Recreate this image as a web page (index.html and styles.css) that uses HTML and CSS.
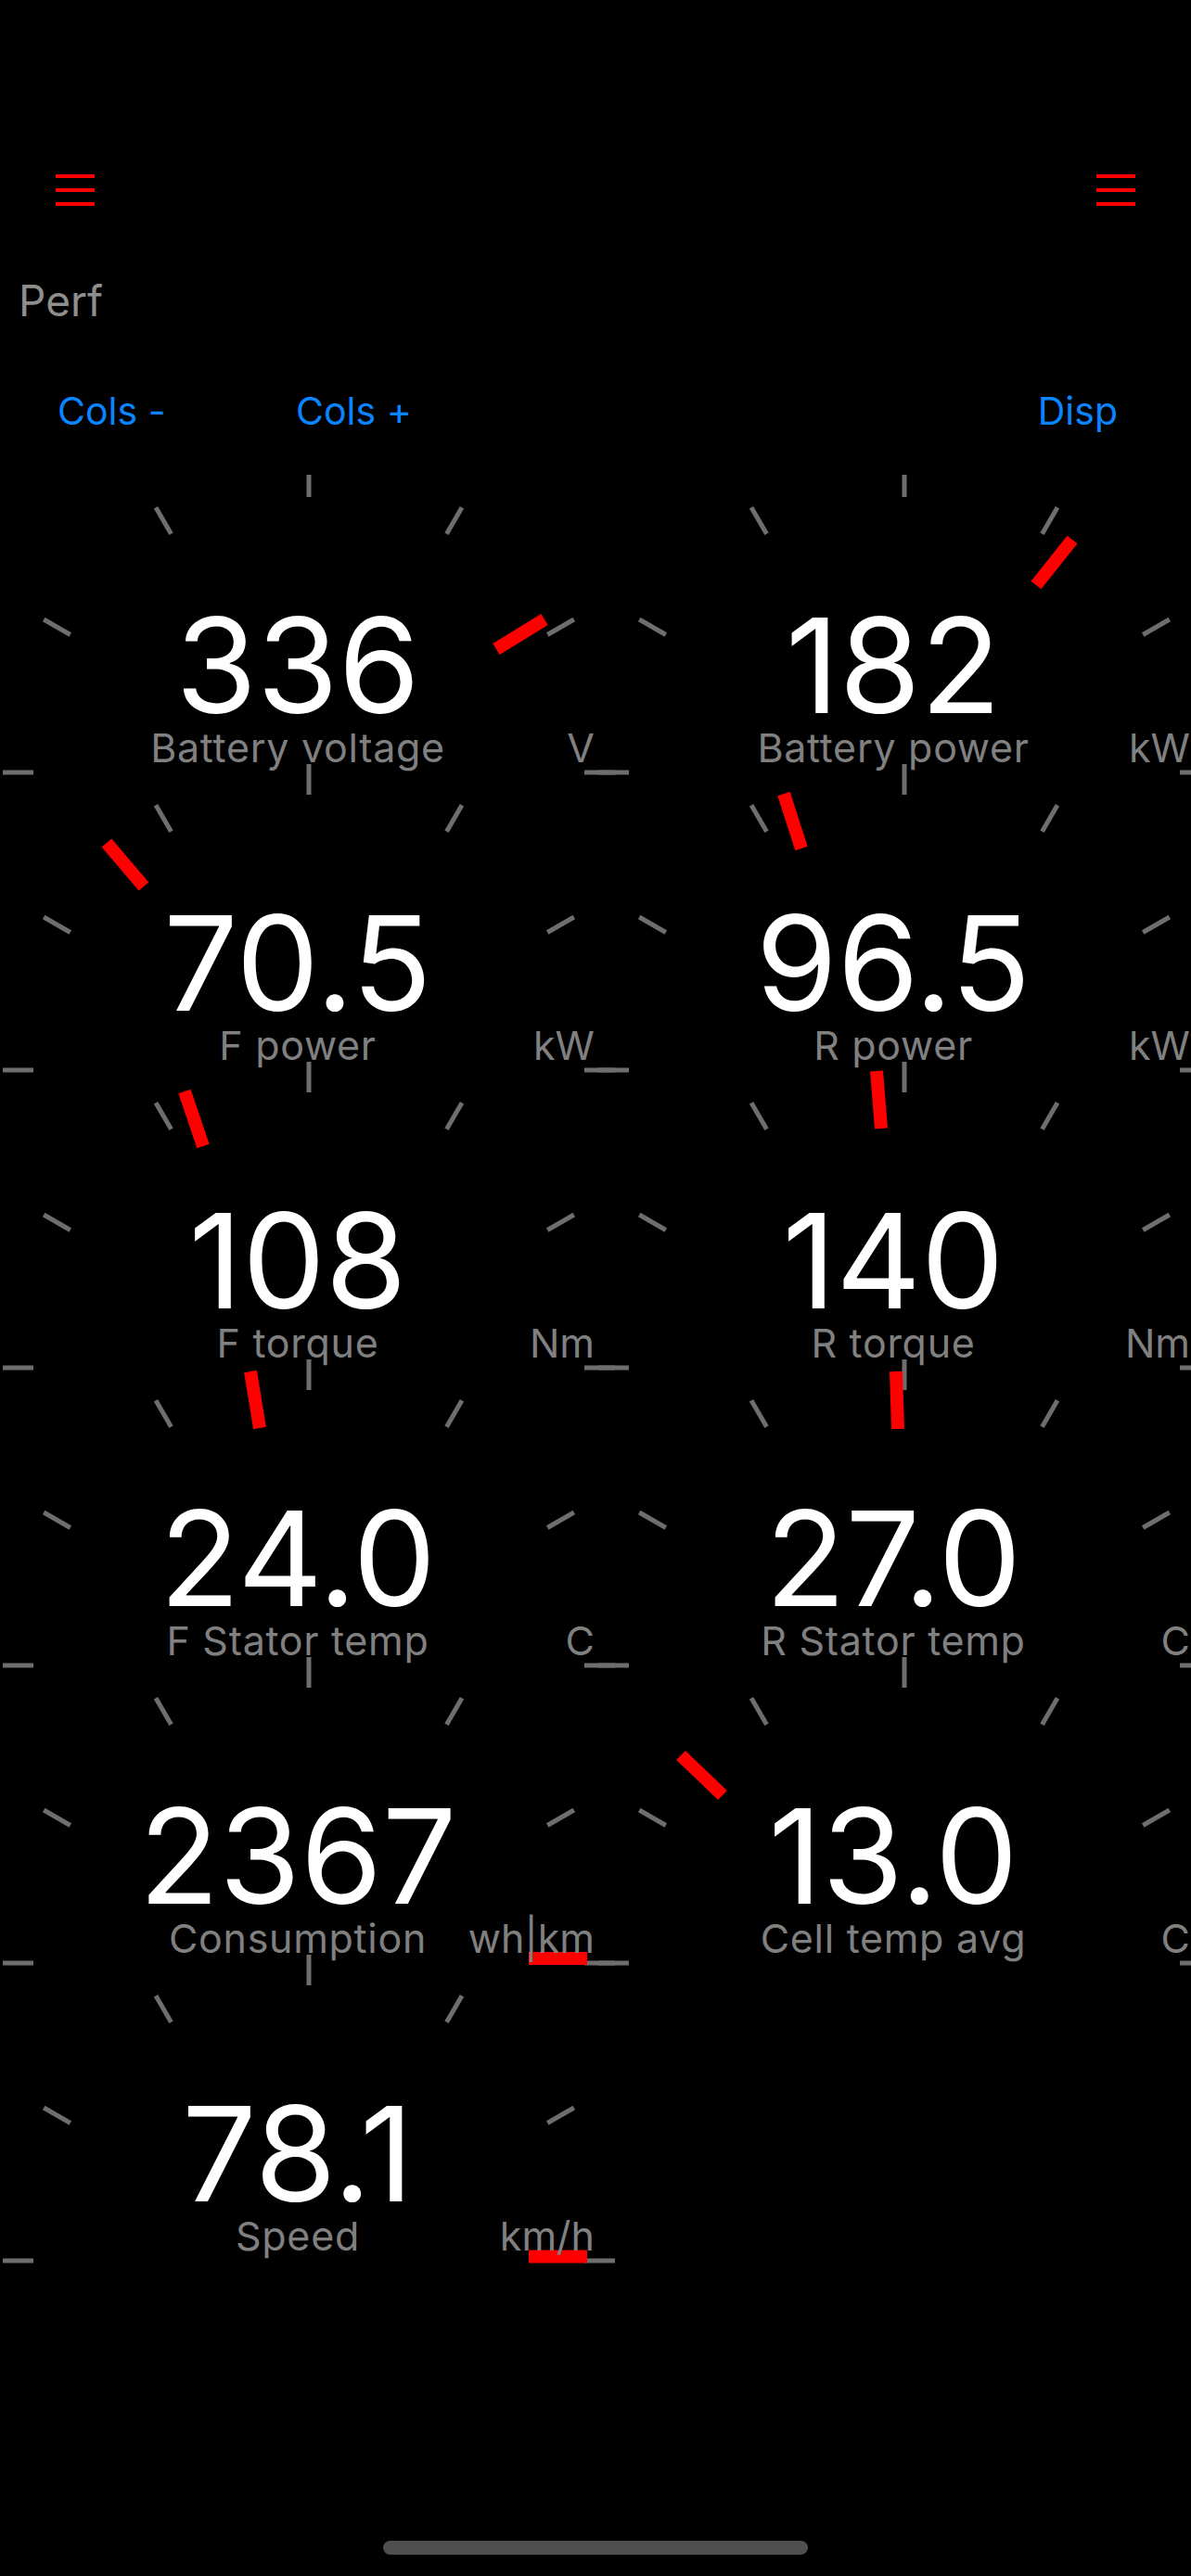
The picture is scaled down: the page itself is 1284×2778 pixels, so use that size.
FILE: index.html
```html
<!DOCTYPE html>
<html lang="en">
<head>
<meta charset="utf-8">
<title>Perf</title>
<link rel="stylesheet" href="styles.css">
</head>
<body>
<svg class="defs" width="0" height="0" aria-hidden="true">
  <defs>
    <g id="ticks" class="ticks">
      <line x1="297" y1="0" x2="330" y2="0"/>
      <line x1="257.2" y1="-148.5" x2="285.8" y2="-165"/>
      <line x1="148.5" y1="-257.2" x2="165" y2="-285.8"/>
      <line x1="0" y1="-297" x2="0" y2="-330"/>
      <line x1="-148.5" y1="-257.2" x2="-165" y2="-285.8"/>
      <line x1="-257.2" y1="-148.5" x2="-285.8" y2="-165"/>
      <line x1="-297" y1="0" x2="-330" y2="0"/>
    </g>
  </defs>
</svg>
<div class="screen">
  <header class="nav">
    <button class="menu" aria-label="Menu">
      <svg viewBox="0 0 42 34" width="42" height="34"><path d="M0 2H42M0 17H42M0 32H42"/></svg>
    </button>
    <button class="menu" aria-label="Menu">
      <svg viewBox="0 0 42 34" width="42" height="34"><path d="M0 2H42M0 17H42M0 32H42"/></svg>
    </button>
  </header>
  <div class="title">Perf</div>
  <nav class="toolbar">
    <span class="btn">Cols -</span>
    <span class="btn">Cols +</span>
    <span class="btn disp">Disp</span>
  </nav>
  <main class="grid">
    <div class="cell">
      <svg class="gauge" viewBox="-333 -341 700 360"><use href="#ticks"/><line class="needle" x1="202" y1="-133" x2="254" y2="-165"/></svg>
      <div class="value">336</div>
      <div class="caption"><span></span><span class="label">Battery voltage</span><span class="unit">V</span></div>
    </div>
    <div class="cell">
      <svg class="gauge" viewBox="-333 -341 700 360"><use href="#ticks"/><line class="needle" x1="142" y1="-202" x2="181" y2="-251"/></svg>
      <div class="value">182</div>
      <div class="caption"><span></span><span class="label">Battery power</span><span class="unit">kW</span></div>
    </div>
    <div class="cell">
      <svg class="gauge" viewBox="-333 -341 700 360"><use href="#ticks"/><line class="needle" x1="-178" y1="-198" x2="-218" y2="-245"/></svg>
      <div class="value">70.5</div>
      <div class="caption"><span></span><span class="label">F power</span><span class="unit">kW</span></div>
    </div>
    <div class="cell">
      <svg class="gauge" viewBox="-333 -341 700 360"><use href="#ticks"/><line class="needle" x1="-111" y1="-239" x2="-130" y2="-298"/></svg>
      <div class="value">96.5</div>
      <div class="caption"><span></span><span class="label">R power</span><span class="unit">kW</span></div>
    </div>
    <div class="cell">
      <svg class="gauge" viewBox="-333 -341 700 360"><use href="#ticks"/><line class="needle" x1="-114" y1="-239" x2="-134" y2="-298"/></svg>
      <div class="value">108</div>
      <div class="caption"><span></span><span class="label">F torque</span><span class="unit">Nm</span></div>
    </div>
    <div class="cell">
      <svg class="gauge" viewBox="-333 -341 700 360"><use href="#ticks"/><line class="needle" x1="-25" y1="-258" x2="-30" y2="-320"/></svg>
      <div class="value">140</div>
      <div class="caption"><span></span><span class="label">R torque</span><span class="unit">Nm</span></div>
    </div>
    <div class="cell">
      <svg class="gauge" viewBox="-333 -341 700 360"><use href="#ticks"/><line class="needle" x1="-53" y1="-256" x2="-63" y2="-317"/></svg>
      <div class="value">24.0</div>
      <div class="caption"><span></span><span class="label">F Stator temp</span><span class="unit">C</span></div>
    </div>
    <div class="cell">
      <svg class="gauge" viewBox="-333 -341 700 360"><use href="#ticks"/><line class="needle" x1="-7" y1="-255" x2="-9" y2="-317"/></svg>
      <div class="value">27.0</div>
      <div class="caption"><span></span><span class="label">R Stator temp</span><span class="unit">C</span></div>
    </div>
    <div class="cell">
      <svg class="gauge" viewBox="-333 -341 700 360"><use href="#ticks"/><line class="needle" x1="237" y1="-5" x2="300" y2="-5"/></svg>
      <div class="value">2367</div>
      <div class="caption"><span></span><span class="label">Consumption</span><span class="unit">wh|km</span></div>
    </div>
    <div class="cell">
      <svg class="gauge" viewBox="-333 -341 700 360"><use href="#ticks"/><line class="needle" x1="-196" y1="-181" x2="-241" y2="-224"/></svg>
      <div class="value">13.0</div>
      <div class="caption"><span></span><span class="label">Cell temp avg</span><span class="unit">C</span></div>
    </div>
    <div class="cell">
      <svg class="gauge" viewBox="-333 -341 700 360"><use href="#ticks"/><line class="needle" x1="237" y1="-4.5" x2="300" y2="-4.5"/></svg>
      <div class="value">78.1</div>
      <div class="caption"><span></span><span class="label">Speed</span><span class="unit">km/h</span></div>
    </div>
  </main>
  <div class="home"></div>
</div>
</body>
</html>
```

FILE: styles.css
```css
* {
  box-sizing: border-box;
  margin: 0;
  padding: 0;
}

html,
body {
  background: #000;
}

body {
  width: 1284px;
  height: 2778px;
  overflow: hidden;
  font-family: Inter, "Noto Sans", "Liberation Sans", sans-serif;
}

.defs {
  position: absolute;
  width: 0;
  height: 0;
}

.ticks line {
  stroke: #6e6e6e;
  stroke-width: 5;
}

.screen {
  position: relative;
  height: 2778px;
}

.nav {
  display: flex;
  justify-content: space-between;
  padding: 188px 60px 0;
}

.menu {
  display: block;
  width: 42px;
  height: 34px;
  background: none;
  border: 0;
}

.menu svg {
  display: block;
}

.menu path {
  stroke: #ff0000;
  stroke-width: 4;
  fill: none;
}

.title {
  margin-top: 74px;
  padding-left: 20px;
  font-size: 46px;
  line-height: 56px;
  color: #8e8e8e;
}

.toolbar {
  margin-top: 66px;
  display: grid;
  grid-template-columns: 257px 257px 1fr;
  padding: 0 79px 0 62px;
  font-size: 41px;
  line-height: 50px;
  color: #0a84ff;
}

.disp {
  justify-self: end;
}

.grid {
  margin-top: 44px;
  display: grid;
  grid-template-columns: repeat(2, 642px);
  grid-auto-rows: 321px;
  overflow: hidden;
  padding-bottom: 24px;
}

.cell {
  position: relative;
  display: flex;
  flex-direction: column;
  justify-content: flex-end;
}

.gauge {
  position: absolute;
  left: 0;
  top: -20px;
  width: 700px;
  height: 360px;
  overflow: visible;
}

.needle {
  stroke: #ff0000;
  stroke-width: 14;
}

.value {
  position: relative;
  font-size: 142px;
  line-height: 125px;
  color: #fff;
  text-align: center;
}

.caption {
  position: relative;
  display: grid;
  grid-template-columns: 1fr auto 1fr;
  font-size: 43px;
  line-height: 53px;
  color: #808080;
  white-space: nowrap;
}

.label {
  letter-spacing: 0.7px;
}

.unit {
  justify-self: end;
  padding-right: 1px;
}

.home {
  position: absolute;
  left: 413px;
  top: 2740px;
  width: 458px;
  height: 15px;
  border-radius: 8px;
  background: #4f4f4f;
}
```
